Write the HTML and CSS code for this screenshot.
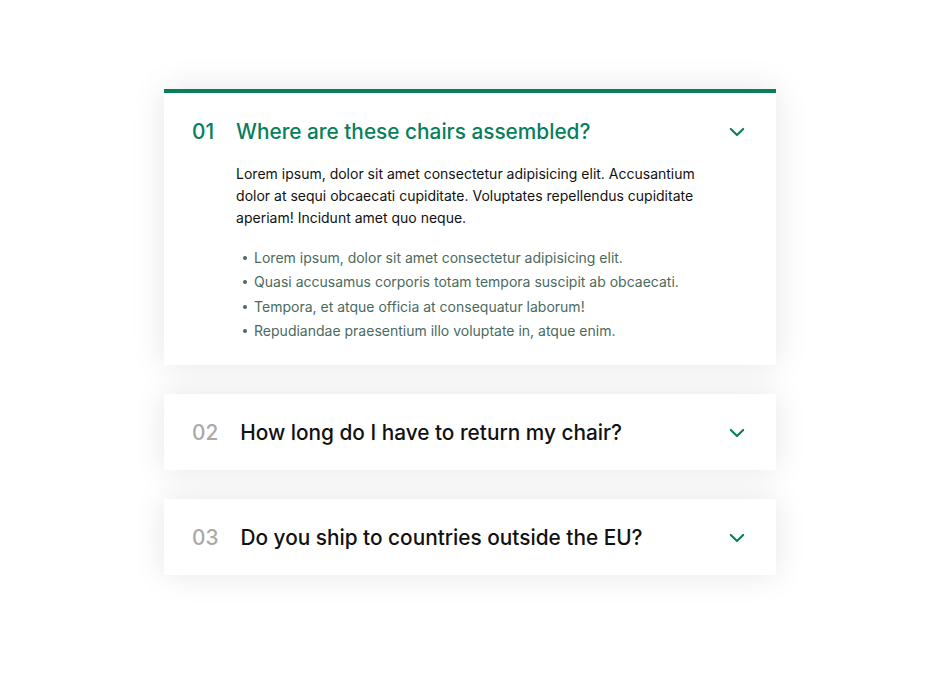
FILE: index.html
```html
<!DOCTYPE html>
<html lang="en">
<head>
<meta charset="utf-8">
<title>Accordion</title>
<link rel="stylesheet" href="styles.css">
</head>
<body>
<div class="accordion">
  <div class="item open">
    <p class="number">01</p>
    <p class="title">Where are these chairs assembled?</p>
    <svg class="icon" viewBox="0 0 512 512"><path d="M112 184l144 144 144-144"/></svg>
    <div class="hidden-box">
      <p class="text">Lorem ipsum, dolor sit amet consectetur adipisicing elit. Accusantium dolor at sequi obcaecati cupiditate. Voluptates repellendus cupiditate aperiam! Incidunt amet quo neque.</p>
      <ul class="list">
        <li>Lorem ipsum, dolor sit amet consectetur adipisicing elit.</li>
        <li>Quasi accusamus corporis totam tempora suscipit ab obcaecati.</li>
        <li>Tempora, et atque officia at consequatur laborum!</li>
        <li>Repudiandae praesentium illo voluptate in, atque enim.</li>
      </ul>
    </div>
  </div>
  <div class="item">
    <p class="number">02</p>
    <p class="title">How long do I have to return my chair?</p>
    <svg class="icon" viewBox="0 0 512 512"><path d="M112 184l144 144 144-144"/></svg>
  </div>
  <div class="item">
    <p class="number">03</p>
    <p class="title">Do you ship to countries outside the EU?</p>
    <svg class="icon" viewBox="0 0 512 512"><path d="M112 184l144 144 144-144"/></svg>
  </div>
</div>
</body>
</html>
```
FILE: styles.css
```css
* {
  margin: 0;
  padding: 0;
  box-sizing: border-box;
}

body {
  font-family: Inter, "Noto Sans", sans-serif;
  color: #212529;
  background: #fff;
}

.accordion {
  width: 612px;
  margin: 0 auto;
  padding: 89px 0 60px;
  display: flex;
  flex-direction: column;
  gap: 29px;
}

.item {
  background: #fff;
  box-shadow: 0 0 32px rgba(0, 0, 0, 0.1);
  padding: 25px 28px 23px;
  display: grid;
  grid-template-columns: auto 1fr auto;
  column-gap: 22px;
  align-items: center;
}

.number,
.title {
  font-size: 20.8px;
  font-weight: 500;
  line-height: 28px;
}

.number {
  color: #aaa;
}

.title {
  color: #111;
}

.icon {
  width: 22px;
  height: 22px;
  fill: none;
  stroke: #087f5b;
  stroke-width: 48;
  stroke-linecap: round;
  stroke-linejoin: round;
}

.hidden-box {
  display: none;
  grid-column: 2;
  margin-top: 17px;
  font-size: 14px;
  line-height: 22px;
}

.open {
  border-top: 4px solid #087f5b;
}

.open .hidden-box {
  display: block;
}

.open .number,
.open .title {
  color: #087f5b;
}

.text {
  color: #111;
  margin-bottom: 18px;
}

.list {
  color: #4b6a5e;
  list-style: none;
  padding-left: 18px;
  display: flex;
  flex-direction: column;
  gap: 2.4px;
}

.list li {
  position: relative;
}

.list li::before {
  content: "";
  position: absolute;
  left: -11px;
  top: 9px;
  width: 4px;
  height: 4px;
  border-radius: 50%;
  background: currentColor;
}
```
